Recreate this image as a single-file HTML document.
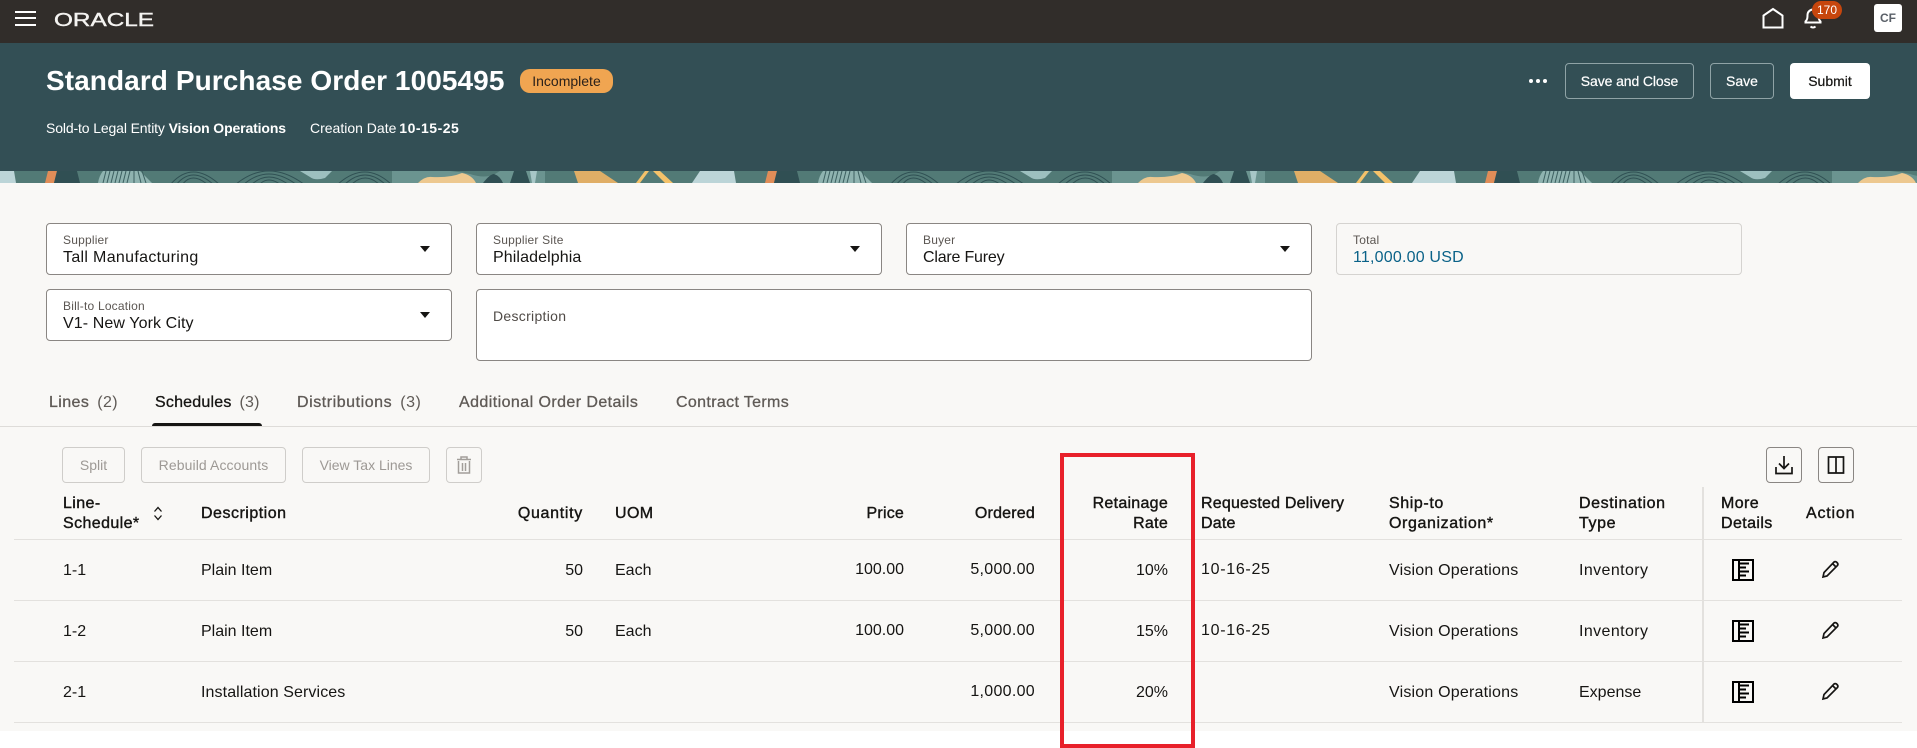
<!DOCTYPE html>
<html lang="en"><head><meta charset="utf-8"><title>Standard Purchase Order 1005495</title>
<style>
html,body{margin:0;padding:0;background:#fff}
body{position:relative;width:1917px;height:748px;overflow:hidden;font-family:"Liberation Sans",sans-serif;color:#161513}
.a{position:absolute}
.t{position:absolute;white-space:nowrap;line-height:20px;font-size:16px;transform:translateY(1px)}
.r{text-align:right}
.th{font-weight:400;-webkit-text-stroke:.4px #161513;letter-spacing:.4px}
.box{position:absolute;box-sizing:border-box;background:#fff;border:1px solid #8a8683;border-radius:4px}
.lbl{position:absolute;left:16px;top:9px;font-size:12px;line-height:14px;color:#5b5652;white-space:nowrap;letter-spacing:.2px}
.val{position:absolute;left:16px;top:24px;font-size:16px;line-height:20px;white-space:nowrap}
.car{position:absolute;left:373px;top:22px;width:0;height:0;border-left:5.5px solid transparent;border-right:5.5px solid transparent;border-top:6px solid #161513}
.btn{position:absolute;box-sizing:border-box;height:36px;line-height:34px;text-align:center;border-radius:4px;font-size:14px}
.hb{top:63px;border:1px solid #8fa3a6;color:#fff;-webkit-text-stroke:.2px #fff}
.dis{top:447px;border:1px solid #cfcdca;color:#9d9995}
.ico{position:absolute;box-sizing:border-box;top:447px;width:36px;height:36px;border:1px solid #8a8683;border-radius:4px}
.hl{position:absolute;left:14px;width:1888px;height:1px;background:#e3e1de}
.tab{position:absolute;top:393px;font-size:16px;line-height:20px;color:#5f5a56;white-space:nowrap;-webkit-text-stroke:.3px #5f5a56;letter-spacing:.4px}
.tab span{font-weight:400;-webkit-text-stroke:0;margin-left:8px}
</style></head><body>
<div class="a" style="left:0;top:0;width:1917px;height:43px;background:#312d2a"></div>
<div class="a" style="left:0;top:43px;width:1917px;height:128px;background:#334f55"></div>
<svg class="a" style="left:0;top:171px" width="1917" height="12">
<defs><pattern id="b" width="720" height="12" patternUnits="userSpaceOnUse">
<rect width="720" height="12" fill="#527a76"/>
<path d="M0 0H14L16 12H0Z" fill="#bcd5d8"/>
<path d="M48 0H57L54 12H45Z" fill="#e08d58"/>
<path d="M57 0H77L80 12H54Z" fill="#304f53"/>
<path d="M103 0H140L152 12H98Q99 5 103 0Z" fill="#8fb3b0"/>
<path d="M106 0L103 12M110 0L107 12M114 0L111 12M118 0L115 12M122 0L119 12M126 0L123 12M130 0L127 12M134 0V12M138 0L141 12M142 0L146 12" stroke="#3c5f60" stroke-width="1"/>
<g fill="none" stroke="#2f5053" stroke-width="1">
<path d="M170 14Q192-12 220 14M176 14Q192-6 214 14M182 14Q192 0 208 14"/>
<path d="M235 14Q268-14 305 14M243 14Q268-8 297 14M251 14Q268-2 289 14M259 14Q268 4 281 14"/>
<path d="M337 14Q365-12 392 14M344 14Q365-6 386 14M351 14Q365 0 380 14"/>
</g>
<path d="M300 0H332L325 7Q315 10 310 6Z" fill="#9dc0bf"/>
<rect x="392" width="153" height="12" fill="#6b9490"/>
<path d="M418 12Q425 5 432 6Q450 7 462 2Q472 4 476 12Z" fill="#edc88f"/>
<path d="M450 0H500L495 3Q485 8 470 3Q460 1 450 0Z" fill="#527a76"/>
<path d="M483 12Q490 3 494 3Q500 5 503 12Z" fill="#304f53"/>
<path d="M514 0H526L530 12H510Z" fill="#304f53"/>
<path d="M530 0H537L535 12H532Z" fill="#a7c7c7"/>
<path d="M574 0H600L618 12H578Z" fill="#e0ae66"/>
<path d="M645 0H649L640 12H636Z" fill="#f4c26a"/>
<path d="M653 0H660L673 12H665Z" fill="#f4c26a"/>
<path d="M700 0H720V12H692Z" fill="#bcd5d8"/>
</pattern></defs>
<rect width="1917" height="12" fill="url(#b)"/></svg>
<div class="a" style="left:0;top:183px;width:1917px;height:548px;background:#f9f8f6"></div>

<div class="a" style="left:15px;top:11px;width:21px;height:2px;background:#fff;box-shadow:0 6px 0 #fff,0 13px 0 #fff"></div>
<svg class="a" style="left:54px;top:8px" width="102" height="22"><text x="0" y="18" font-family="Liberation Sans" font-size="18" fill="#f4f3f1" stroke="#f4f3f1" stroke-width=".4" textLength="100" lengthAdjust="spacingAndGlyphs">ORACLE</text></svg>

<svg class="a" style="left:1761px;top:6px" width="24" height="24" fill="none" stroke="#fff" stroke-width="2"><path d="M2.500 22V9.500L12 3l9.500 6.500V22"/><path d="M1.500 21.500H22.500"/></svg>
<svg class="a" style="left:1802px;top:6px" width="22" height="24" fill="none" stroke="#fff" stroke-width="2"><path d="M3.500 15.500c2-2 2-4 2-6.500 0-3 2.500-5.500 5.500-5.500s5.500 2.500 5.500 5.500c0 2.500 0 4.500 2 6.500v1H3.500z"/><path d="M8.500 20.500q2.500 2 5 0"/></svg>
<div class="a" style="left:1812px;top:1px;width:30px;height:18px;border-radius:9px;background:#c7460d;color:#fff;font-size:12px;line-height:18px;text-align:center">170</div>
<div class="a" style="left:1874px;top:4px;width:28px;height:28px;border-radius:3px;background:#fff;color:#5a6068;font-size:12px;font-weight:700;line-height:29px;text-align:center">CF</div>

<div class="t" style="left:46px;top:62px;line-height:36px;font-size:28px;font-weight:700;color:#fff;letter-spacing:.08px">Standard Purchase Order 1005495</div>
<div class="a" style="left:520px;top:69px;width:93px;height:24px;border-radius:10px;background:#f0a551;font-size:14px;line-height:24px;text-align:center;color:#2b211a">Incomplete</div>
<div class="t" style="left:46px;top:117px;font-size:14px;color:#fff;letter-spacing:-.13px">Sold-to Legal Entity <b>Vision Operations</b></div>
<div class="t" style="left:310px;top:117px;font-size:14px;color:#fff">Creation Date <b style="letter-spacing:.5px;margin-left:-1px">10-15-25</b></div>

<div class="a" style="left:1529px;top:79px;width:4px;height:4px;border-radius:2px;background:#fff;box-shadow:7px 0 0 #fff,14px 0 0 #fff"></div>
<div class="btn hb" style="left:1565px;width:129px;letter-spacing:-.1px">Save and Close</div>
<div class="btn hb" style="left:1710px;width:64px">Save</div>
<div class="btn" style="left:1790px;top:63px;width:80px;background:#fff;line-height:36px;-webkit-text-stroke:.2px #161513">Submit</div>

<div class="box" style="left:46px;top:223px;width:406px;height:52px"><div class="lbl">Supplier</div><div class="val" style="letter-spacing:.32px">Tall Manufacturing</div><div class="car"></div></div>
<div class="box" style="left:476px;top:223px;width:406px;height:52px"><div class="lbl">Supplier Site</div><div class="val" style="letter-spacing:.1px">Philadelphia</div><div class="car"></div></div>
<div class="box" style="left:906px;top:223px;width:406px;height:52px"><div class="lbl">Buyer</div><div class="val" style="letter-spacing:-.2px">Clare Furey</div><div class="car"></div></div>
<div class="box" style="left:1336px;top:223px;width:406px;height:52px;background:#f9f8f6;border-color:#d5d3d0"><div class="lbl">Total</div><div class="val" style="color:#0a6288;letter-spacing:.2px">11,000.00 USD</div></div>
<div class="box" style="left:46px;top:289px;width:406px;height:52px"><div class="lbl">Bill-to Location</div><div class="val" style="letter-spacing:.1px">V1- New York City</div><div class="car"></div></div>
<div class="box" style="left:476px;top:289px;width:836px;height:72px"><div class="t" style="left:16px;top:15px;font-size:14px;color:#4f4a46;letter-spacing:.3px">Description</div></div>

<div class="tab" style="left:49px">Lines<span>(2)</span></div>
<div class="tab" style="left:155px;color:#161513;-webkit-text-stroke-color:#161513;letter-spacing:.2px">Schedules<span style="color:#5f5a56">(3)</span></div>
<div class="tab" style="left:297px;letter-spacing:.55px">Distributions<span>(3)</span></div>
<div class="tab" style="left:459px;letter-spacing:.43px">Additional Order Details</div>
<div class="tab" style="left:676px;letter-spacing:.35px">Contract Terms</div>
<div class="a" style="left:0;top:426px;width:1917px;height:1px;background:#dedcd9"></div>
<div class="a" style="left:152px;top:423px;width:110px;height:3px;border-radius:3px 3px 0 0;background:#161513"></div>

<div class="btn dis" style="left:62px;width:63px">Split</div>
<div class="btn dis" style="left:141px;width:145px;letter-spacing:.1px">Rebuild Accounts</div>
<div class="btn dis" style="left:302px;width:128px">View Tax Lines</div>
<div class="ico" style="left:446px;border-color:#cfcdca"><svg width="34" height="34" fill="none" stroke="#a29e9a" stroke-width="1.500"><path d="M10 11.500h14M14 11.500V9h6v2.500M11.500 13v12h11V13M15.500 15v8M18.500 15v8"/></svg></div>
<div class="ico" style="left:1766px"><svg width="34" height="34" fill="none" stroke="#161513" stroke-width="1.700"><path d="M17 8v12M12 15.500l5 5 5-5M9 19v6.500h16V19"/></svg></div>
<div class="ico" style="left:1818px"><svg width="34" height="34" fill="none" stroke="#161513" stroke-width="1.700"><path d="M9.500 9h15v16h-15zM17 9v16"/></svg></div>

<div class="t th" style="left:63px;top:493px">Line-<br>Schedule*</div>
<svg class="a" style="left:152px;top:505px" width="12" height="17" fill="none" stroke="#161513" stroke-width="1.300"><path d="M2.500 6.500L6 2.500l3.500 4M2.500 10.500l3.500 4 3.500-4"/></svg>
<div class="t th" style="left:201px;top:503px;letter-spacing:.5px">Description</div>
<div class="t th r" style="right:1334px;top:503px;letter-spacing:.7px">Quantity</div>
<div class="t th" style="left:615px;top:503px">UOM</div>
<div class="t th r" style="right:1013px;top:503px;letter-spacing:.2px">Price</div>
<div class="t th r" style="right:882px;top:503px;letter-spacing:.2px">Ordered</div>
<div class="t th r" style="right:749px;top:493px;letter-spacing:.27px">Retainage<br>Rate</div>
<div class="t th" style="left:1201px;top:493px;letter-spacing:.2px">Requested Delivery<br>Date</div>
<div class="t th" style="left:1389px;top:493px;letter-spacing:.6px">Ship-to<br>Organization*</div>
<div class="t th" style="left:1579px;top:493px;letter-spacing:.6px">Destination<br>Type</div>
<div class="t th" style="left:1721px;top:493px">More<br>Details</div>
<div class="t th" style="left:1806px;top:503px;letter-spacing:.8px">Action</div>

<div class="hl" style="top:539px"></div><div class="hl" style="top:600px"></div><div class="hl" style="top:661px"></div><div class="hl" style="top:722px"></div>
<div class="a" style="left:1702px;top:487px;width:2px;height:236px;background:#e3e1de"></div>

<div class="t" style="left:63px;top:560px">1-1</div><div class="t" style="left:201px;top:560px">Plain Item</div><div class="t r" style="right:1334px;top:560px">50</div><div class="t" style="left:615px;top:560px">Each</div><div class="t r" style="right:1013px;top:559px">100.00</div><div class="t r" style="right:882px;top:559px;letter-spacing:.3px">5,000.00</div><div class="t r" style="right:749px;top:560px">10%</div><div class="t" style="left:1201px;top:559px;letter-spacing:.7px">10-16-25</div><div class="t" style="left:1389px;top:560px;letter-spacing:.2px">Vision Operations</div><div class="t" style="left:1579px;top:560px;letter-spacing:.4px">Inventory</div>

<div class="t" style="left:63px;top:621px">1-2</div><div class="t" style="left:201px;top:621px">Plain Item</div><div class="t r" style="right:1334px;top:621px">50</div><div class="t" style="left:615px;top:621px">Each</div><div class="t r" style="right:1013px;top:620px">100.00</div><div class="t r" style="right:882px;top:620px;letter-spacing:.3px">5,000.00</div><div class="t r" style="right:749px;top:621px">15%</div><div class="t" style="left:1201px;top:620px;letter-spacing:.7px">10-16-25</div><div class="t" style="left:1389px;top:621px;letter-spacing:.2px">Vision Operations</div><div class="t" style="left:1579px;top:621px;letter-spacing:.4px">Inventory</div>

<div class="t" style="left:63px;top:682px">2-1</div><div class="t" style="left:201px;top:682px;letter-spacing:.1px">Installation Services</div><div class="t r" style="right:882px;top:681px;letter-spacing:.3px">1,000.00</div><div class="t r" style="right:749px;top:682px">20%</div><div class="t" style="left:1389px;top:682px;letter-spacing:.2px">Vision Operations</div><div class="t" style="left:1579px;top:682px">Expense</div>

<svg class="a" style="left:0;top:0;pointer-events:none" width="1917" height="748">
<defs>
<g id="d" fill="none" stroke="#000"><rect x="1733" y="560" width="20" height="20" stroke-width="2"/><path d="M1739 560v20M1739 563.500h10M1739 567.500h7M1739 571.500h10M1739 575.500h7" stroke-width="2"/></g>
<g id="p" fill="none" stroke="#161513" stroke-width="1.700"><path d="M1823 577l1-4.500 10-10.500q1.500-1 3 .5t.5 3l-10.500 10.500zM1832.500 563.500l3.500 3.500"/></g>
</defs>
<use href="#d"/><use href="#d" y="61"/><use href="#d" y="122"/>
<use href="#p"/><use href="#p" y="61"/><use href="#p" y="122"/>
<rect x="1062" y="455" width="131" height="291" fill="none" stroke="#e8202a" stroke-width="4"/>
</svg>
</body></html>
